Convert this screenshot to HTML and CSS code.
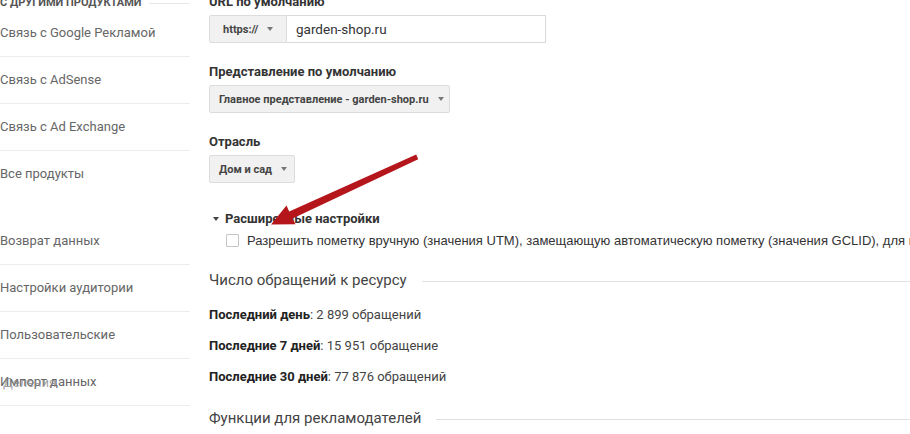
FILE: index.html
```html
<!DOCTYPE html>
<html lang="ru">
<head>
<meta charset="utf-8">
<title>Настройки ресурса</title>
<link rel="stylesheet" href="styles.css">
</head>
<body>
<div class="page">
  <aside class="sidebar">
    <div class="side-head"><span>С ДРУГИМИ ПРОДУКТАМИ</span><i class="side-rule"></i></div>
    <div class="side-item">Связь с Google Рекламой</div>
    <div class="side-item">Связь с AdSense</div>
    <div class="side-item">Связь с Ad Exchange</div>
    <div class="side-item last">Все продукты</div>
    <div class="side-item gap">Возврат данных</div>
    <div class="side-item">Настройки аудитории</div>
    <div class="side-item">Пользовательские</div>
    <div class="side-item glitch">Импорт данных<span class="ghost">Деления</span></div>
  </aside>

  <main class="main">
    <div class="label first">URL по умолчанию</div>
    <div class="url-group">
      <div class="drop proto">https://<span class="caret"></span></div>
      <div class="url-input">garden-shop.ru</div>
    </div>

    <div class="label">Представление по умолчанию</div>
    <div class="drop view">Главное представление - garden-shop.ru<span class="caret"></span></div>

    <div class="label">Отрасль</div>
    <div class="drop industry">Дом и сад<span class="caret"></span></div>

    <div class="adv"><span class="tri"></span>Расширенные настройки</div>
    <div class="check-row"><span class="checkbox"></span><span class="check-text">Разрешить пометку вручную (значения UTM), замещающую автоматическую пометку (значения GCLID), для интеграции с Google Рекламой</span></div>

    <div class="section-head">Число обращений к ресурсу<i class="rule"></i></div>
    <div class="stat s1"><b>Последний день</b>: 2 899 обращений</div>
    <div class="stat"><b>Последние 7 дней</b>: 15 951 обращение</div>
    <div class="stat"><b>Последние 30 дней</b>: 77 876 обращений</div>

    <div class="section-head s2">Функции для рекламодателей<i class="rule"></i></div>
  </main>

  <svg class="arrow" width="910" height="434" viewBox="0 0 910 434">
    <polygon points="418.2,159.2 292.6,218.4 295.5,224.2 271,224.5 286.5,205.5 289.2,211.6 416.2,154.6" fill="#b5161c"/>
  </svg>
</div>
</body>
</html>
```

FILE: styles.css
```css
html, body {
  margin: 0;
  padding: 0;
  background: #ffffff;
  overflow: hidden;
}
body {
  width: 910px;
  height: 434px;
  font-family: Roboto, "Noto Sans", Arial, sans-serif;
  color: #333;
}
.page {
  position: relative;
  display: flex;
  gap: 19px;
  width: 910px;
  height: 434px;
  overflow: hidden;
}

/* Sidebar */
.sidebar {
  width: 190px;
  flex: none;
  margin-top: -4px;
}
.side-head {
  display: flex;
  align-items: center;
  height: 14px;
  font-size: 11px;
  font-weight: 700;
  color: #555;
  white-space: nowrap;
  line-height: 14px;
}
.side-rule {
  flex: 1;
  height: 1px;
  background: #e8e8e8;
  margin-left: 7px;
}
.side-item {
  height: 46px;
  line-height: 46px;
  font-size: 13px;
  color: #666;
  border-bottom: 1px solid #ececec;
  white-space: nowrap;
}
.side-item.last { border-bottom: none; }
.side-item.gap { margin-top: 21px; }
.side-item.glitch { position: relative; }
.ghost {
  position: absolute;
  left: 3px;
  top: 1px;
  color: #888;
  opacity: 0.75;
}

/* Main */
.main {
  flex: 1;
  min-width: 0;
  white-space: nowrap;
}
.label {
  font-size: 13px;
  font-weight: 700;
  line-height: 16px;
  color: #333;
  margin-top: 21px;
  margin-bottom: 5px;
}
.label.first { margin-top: -6px; }

.url-group {
  display: flex;
  height: 28px;
}
.drop {
  display: inline-flex;
  align-items: center;
  box-sizing: border-box;
  height: 28px;
  background: #f1f1f1;
  border: 1px solid #dcdcdc;
  border-radius: 2px;
  font-size: 11px;
  font-weight: 700;
  color: #444;
}
.drop.proto {
  width: 78px;
  padding-left: 13px;
  border-radius: 2px 0 0 2px;
}
.drop.view {
  width: 241px;
  padding-left: 9px;
}
.drop.industry {
  width: 86px;
  padding-left: 9px;
}
.caret {
  display: inline-block;
  width: 0;
  height: 0;
  border-left: 3.5px solid transparent;
  border-right: 3.5px solid transparent;
  border-top: 4px solid #777;
  margin-left: 9px;
}
.url-input {
  box-sizing: border-box;
  width: 259px;
  height: 28px;
  border: 1px solid #d9d9d9;
  border-left: none;
  padding-left: 9px;
  font-size: 13.5px;
  line-height: 26px;
  color: #333;
}

.adv {
  display: flex;
  align-items: center;
  margin-top: 28px;
  line-height: 16px;
  font-size: 13px;
  font-weight: 700;
  color: #333;
}
.tri {
  display: inline-block;
  width: 0;
  height: 0;
  border-left: 3.5px solid transparent;
  border-right: 3.5px solid transparent;
  border-top: 4px solid #444;
  margin-left: 4px;
  margin-right: 6px;
}
.check-row {
  display: flex;
  align-items: center;
  margin-top: 5px;
  height: 16px;
  padding-left: 17px;
}
.checkbox {
  flex: none;
  box-sizing: border-box;
  width: 13px;
  height: 13px;
  border: 1px solid #c6c6c6;
  border-radius: 1px;
  background: #fff;
  margin-right: 8px;
}
.check-text {
  font-family: "Liberation Sans", Arial, sans-serif;
  font-size: 13px;
  color: #333;
}

.section-head {
  display: flex;
  align-items: center;
  margin-top: 22px;
  line-height: 20px;
  font-size: 15px;
  color: #444;
}
.section-head.s2 { margin-top: 23px; }
.rule {
  flex: 1;
  height: 1px;
  background: #e0e0e0;
  margin-left: 15px;
  margin-top: 2px;
}
.stat {
  font-size: 13px;
  line-height: 16px;
  color: #444;
  margin-top: 15px;
}
.stat.s1 { margin-top: 17px; }
.stat b {
  color: #222;
  font-weight: 700;
}

.arrow {
  position: absolute;
  left: 0;
  top: 0;
  pointer-events: none;
}
```
